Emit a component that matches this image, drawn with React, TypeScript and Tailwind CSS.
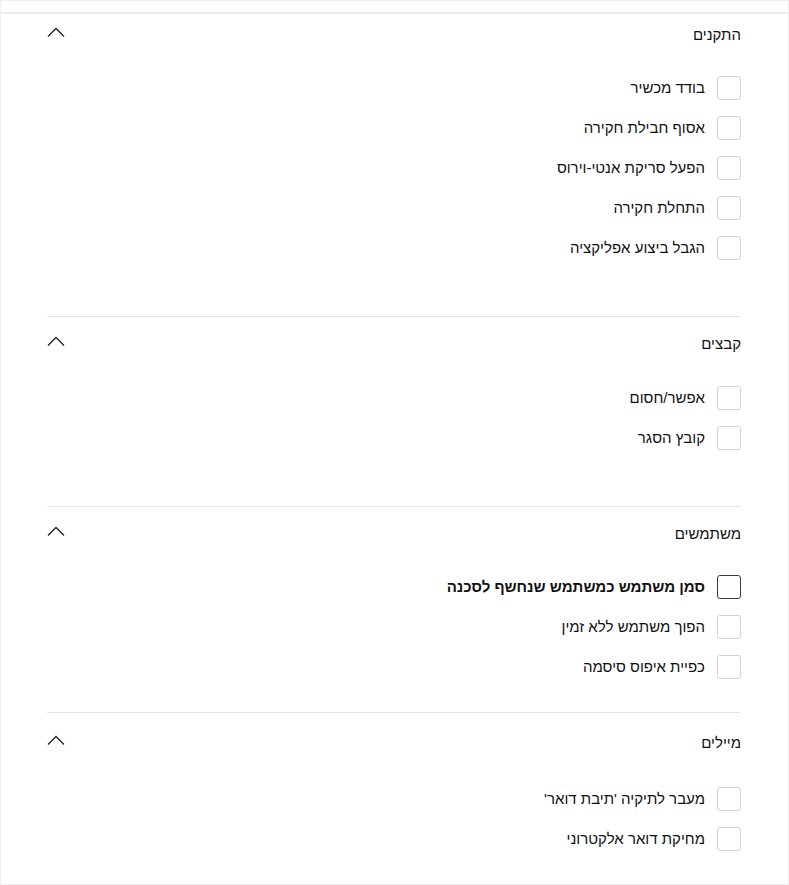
type Item = { label: string; strong?: boolean };

type Section = {
  title: string;
  items: Item[];
  pad: string; // per-section spacing, tuned to the reference
};

const sections: Section[] = [
  {
    title: 'התקנים',
    pad: 'pt-[11px] pb-[48px]',
    items: [
      { label: 'בודד מכשיר' },
      { label: 'אסוף חבילת חקירה' },
      { label: 'הפעל סריקת אנטי-וירוס' },
      { label: 'התחלת חקירה' },
      { label: 'הגבל ביצוע אפליקציה' },
    ],
  },
  {
    title: 'קבצים',
    pad: 'pt-[17px] pb-[48px]',
    items: [{ label: 'אפשר/חסום' }, { label: 'קובץ הסגר' }],
  },
  {
    title: 'משתמשים',
    pad: 'pt-[17px] pb-[25px]',
    items: [
      { label: 'סמן משתמש כמשתמש שנחשף לסכנה', strong: true },
      { label: 'הפוך משתמש ללא זמין' },
      { label: 'כפיית איפוס סיסמה' },
    ],
  },
  {
    title: 'מיילים',
    pad: 'pt-[20px] pb-[22px]',
    items: [{ label: "מעבר לתיקיה 'תיבת דואר'" }, { label: 'מחיקת דואר אלקטרוני' }],
  },
];

function Chevron() {
  return (
    <svg className="mb-[6px] h-[10px] w-[18px] text-[#222]" viewBox="0 0 18 10" fill="none" stroke="currentColor" strokeWidth="1.3">
      <path d="M1 9.5 L9 1.5 L17 9.5" />
    </svg>
  );
}

function Row({ item }: { item: Item }) {
  return (
    <div className="flex h-[40px] items-center gap-[12px]">
      <span
        className={
          item.strong
            ? 'h-6 w-6 shrink-0 rounded-[3px] border-[1.5px] border-[#3c3c3c] bg-white'
            : 'h-6 w-6 shrink-0 rounded-[3px] border border-[#d2d2d2] bg-white'
        }
      />
      <span className={item.strong ? 'text-[15px] font-semibold leading-5' : 'text-[15px] leading-5'}>{item.label}</span>
    </div>
  );
}

export default function App() {
  return (
    <div
      dir="rtl"
      className="flex h-[885px] w-[789px] flex-col border border-[#efefef] bg-white text-[#111]"
      style={{ fontFamily: '"Liberation Sans", "DejaVu Sans", sans-serif' }}
    >
      <div className="h-[13px] shrink-0 border-b-2 border-[#ebebeb]" />
      <div className="flex flex-1 flex-col pl-[46px] pr-[47px]">
        {sections.map((s, i) => (
          <section key={s.title} className={(i > 0 ? 'border-t border-[#e6e6e6] ' : '') + s.pad + (i === sections.length - 1 ? ' flex-1' : '')}>
            <div className="flex h-5 items-center justify-between">
              <h2 className="text-[15px] font-normal leading-5">{s.title}</h2>
              <Chevron />
            </div>
            <div className={i === 1 ? 'mt-[24px]' : i === 3 ? 'mt-[26px]' : 'mt-[23px]'}>
              {s.items.map((it) => (
                <Row key={it.label} item={it} />
              ))}
            </div>
          </section>
        ))}
      </div>
    </div>
  );
}
